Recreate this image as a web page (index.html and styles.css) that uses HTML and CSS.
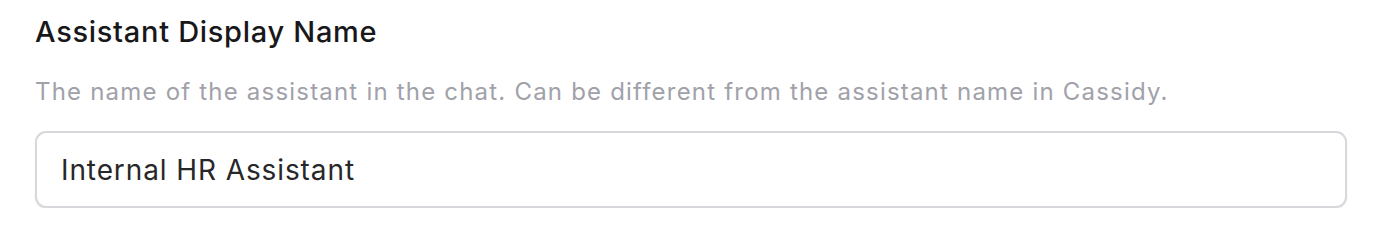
FILE: index.html
```html
<!DOCTYPE html>
<html lang="en">
  <head>
    <meta charset="UTF-8" />
    <title>Assistant Settings</title>
    <link rel="stylesheet" href="styles.css">
  </head>
  <body>
    <div class="field">
      <label class="field-label" for="displayName">Assistant Display Name</label>
      <p class="field-help">The name of the assistant in the chat. Can be different from the assistant name in Cassidy.</p>
      <input class="field-input" id="displayName" type="text" value="Internal HR Assistant" />
    </div>
  </body>
</html>
```

FILE: styles.css
```css
body {
  margin: 0;
  background: #ffffff;
  font-family: Inter, "Noto Sans", sans-serif;
}

.field {
  display: flex;
  flex-direction: column;
  padding: 14px 27px 0 35px;
}

.field-label {
  font-size: 29px;
  font-weight: 500;
  letter-spacing: 0.7px;
  color: #18181b;
  line-height: 36px;
}

.field-help {
  margin: 27px 0 0;
  font-size: 24px;
  letter-spacing: 1.2px;
  color: #a1a1aa;
  line-height: 30px;
}

.field-input {
  margin-top: 24px;
  height: 77px;
  box-sizing: border-box;
  padding: 0 24px;
  border: 2px solid #d8d8dc;
  border-radius: 11px;
  font-family: inherit;
  font-size: 28px;
  letter-spacing: 0.9px;
  color: #27272a;
  background: #ffffff;
  box-shadow: 0 1px 2px rgba(0, 0, 0, 0.06);
  outline: none;
}
```
